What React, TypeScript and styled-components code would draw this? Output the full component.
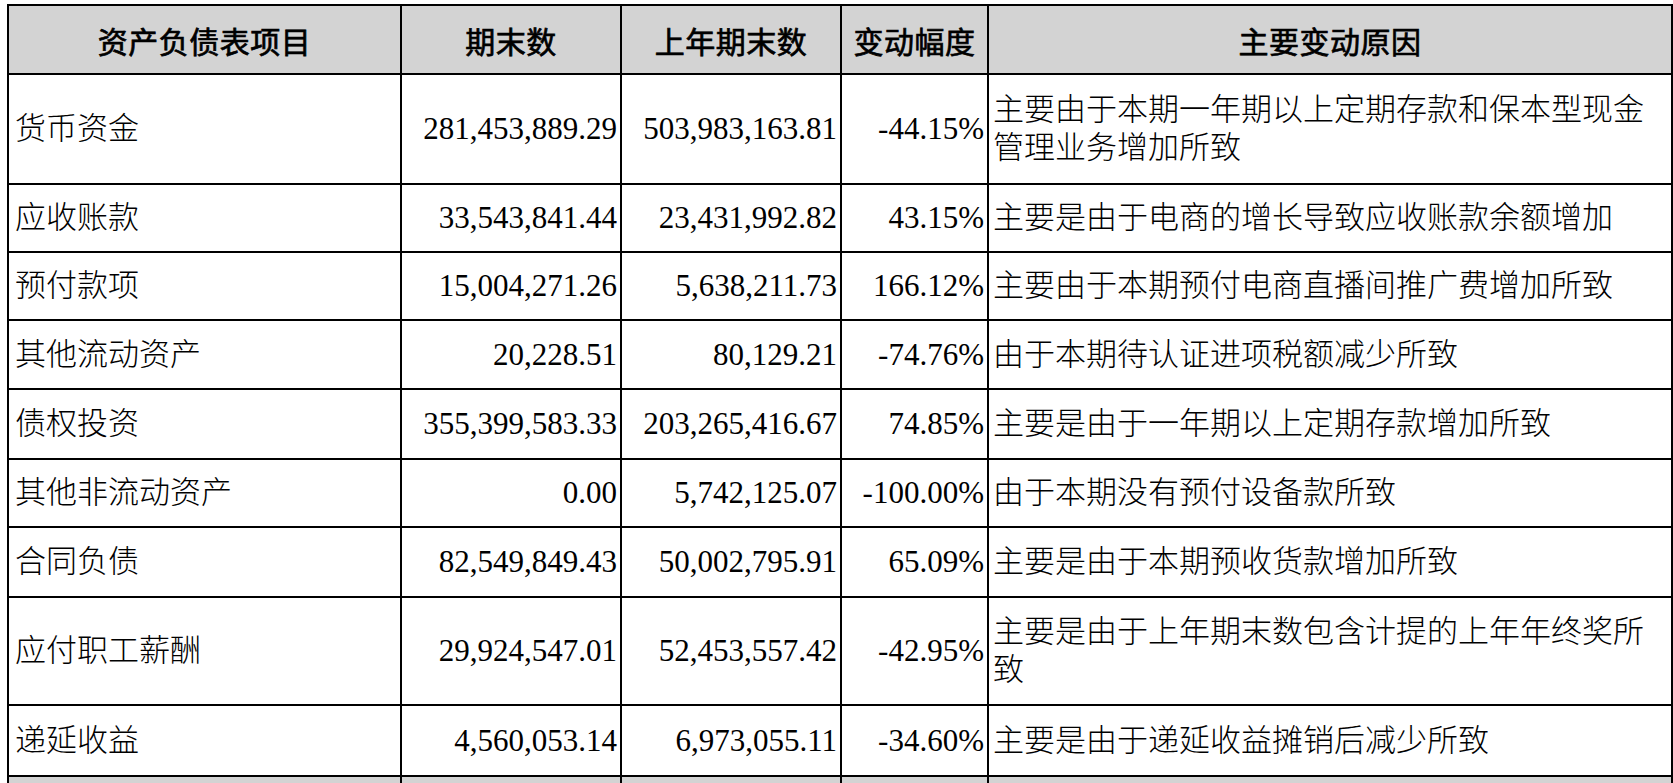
import React from "react";
import styled, { createGlobalStyle } from "styled-components";

const GlobalStyle = createGlobalStyle`
  html, body {
    margin: 0;
    padding: 0;
    background: #ffffff;
  }
  body {
    font-family: "Liberation Serif", "Noto Sans CJK SC", serif;
    color: #000;
  }
`;

const Page = styled.div`
  padding: 4px 0 0 7px;
`;

const Table = styled.table`
  border-collapse: collapse;
  table-layout: fixed;
  width: 1664px;
  font-family: "Liberation Serif", "Noto Sans CJK SC", serif;
  font-size: 31px;
  font-weight: 300;
  color: #000;
`;

const HeadRow = styled.tr`
  height: 69px;
  background: #d3d3d3;
`;

const Row = styled.tr<{ $h: number }>`
  height: ${(p) => p.$h}px;
`;

const GrayRow = styled.tr`
  height: 60px;
  background: #d3d3d3;
`;

const Th = styled.th`
  border: 2px solid #000;
  font-weight: 400;
  font-size: 30px;
  text-align: center;
  vertical-align: middle;
  padding: 0;
  letter-spacing: 0.5px;
  -webkit-text-stroke: 0.7px #000;
`;

const Td = styled.td<{ $align: "left" | "right" }>`
  border: 2px solid #000;
  text-align: ${(p) => p.$align};
  vertical-align: middle;
  padding: ${(p) => (p.$align === "left" ? "0 4px 0 6px" : "0 3px 0 2px")};
  line-height: 38px;
  white-space: normal;
  word-break: break-all;
`;

const ReasonTd = styled(Td)`
  padding: 0 6px 0 4px;
`;

type Item = {
  name: string;
  end: string;
  prev: string;
  pct: string;
  reason: string;
  h: number;
};

const rows: Item[] = [
  { name: "货币资金", end: "281,453,889.29", prev: "503,983,163.81", pct: "-44.15%", reason: "主要由于本期一年期以上定期存款和保本型现金管理业务增加所致", h: 110 },
  { name: "应收账款", end: "33,543,841.44", prev: "23,431,992.82", pct: "43.15%", reason: "主要是由于电商的增长导致应收账款余额增加", h: 68 },
  { name: "预付款项", end: "15,004,271.26", prev: "5,638,211.73", pct: "166.12%", reason: "主要由于本期预付电商直播间推广费增加所致", h: 68 },
  { name: "其他流动资产", end: "20,228.51", prev: "80,129.21", pct: "-74.76%", reason: "由于本期待认证进项税额减少所致", h: 69 },
  { name: "债权投资", end: "355,399,583.33", prev: "203,265,416.67", pct: "74.85%", reason: "主要是由于一年期以上定期存款增加所致", h: 70 },
  { name: "其他非流动资产", end: "0.00", prev: "5,742,125.07", pct: "-100.00%", reason: "由于本期没有预付设备款所致", h: 68 },
  { name: "合同负债", end: "82,549,849.43", prev: "50,002,795.91", pct: "65.09%", reason: "主要是由于本期预收货款增加所致", h: 70 },
  { name: "应付职工薪酬", end: "29,924,547.01", prev: "52,453,557.42", pct: "-42.95%", reason: "主要是由于上年期末数包含计提的上年年终奖所致", h: 108 },
  { name: "递延收益", end: "4,560,053.14", prev: "6,973,055.11", pct: "-34.60%", reason: "主要是由于递延收益摊销后减少所致", h: 71 },
];

export default function App() {
  return (
    <>
      <GlobalStyle />
      <Page>
        <Table>
          <colgroup>
            <col style={{ width: 393 }} />
            <col style={{ width: 220 }} />
            <col style={{ width: 220 }} />
            <col style={{ width: 147 }} />
            <col style={{ width: 684 }} />
          </colgroup>
          <thead>
            <HeadRow>
              <Th>资产负债表项目</Th>
              <Th>期末数</Th>
              <Th>上年期末数</Th>
              <Th>变动幅度</Th>
              <Th>主要变动原因</Th>
            </HeadRow>
          </thead>
          <tbody>
            {rows.map((r) => (
              <Row key={r.name} $h={r.h}>
                <Td $align="left">{r.name}</Td>
                <Td $align="right">{r.end}</Td>
                <Td $align="right">{r.prev}</Td>
                <Td $align="right">{r.pct}</Td>
                <ReasonTd $align="left">{r.reason}</ReasonTd>
              </Row>
            ))}
            <GrayRow>
              <Td $align="left"></Td>
              <Td $align="right"></Td>
              <Td $align="right"></Td>
              <Td $align="right"></Td>
              <Td $align="left"></Td>
            </GrayRow>
          </tbody>
        </Table>
      </Page>
    </>
  );
}
